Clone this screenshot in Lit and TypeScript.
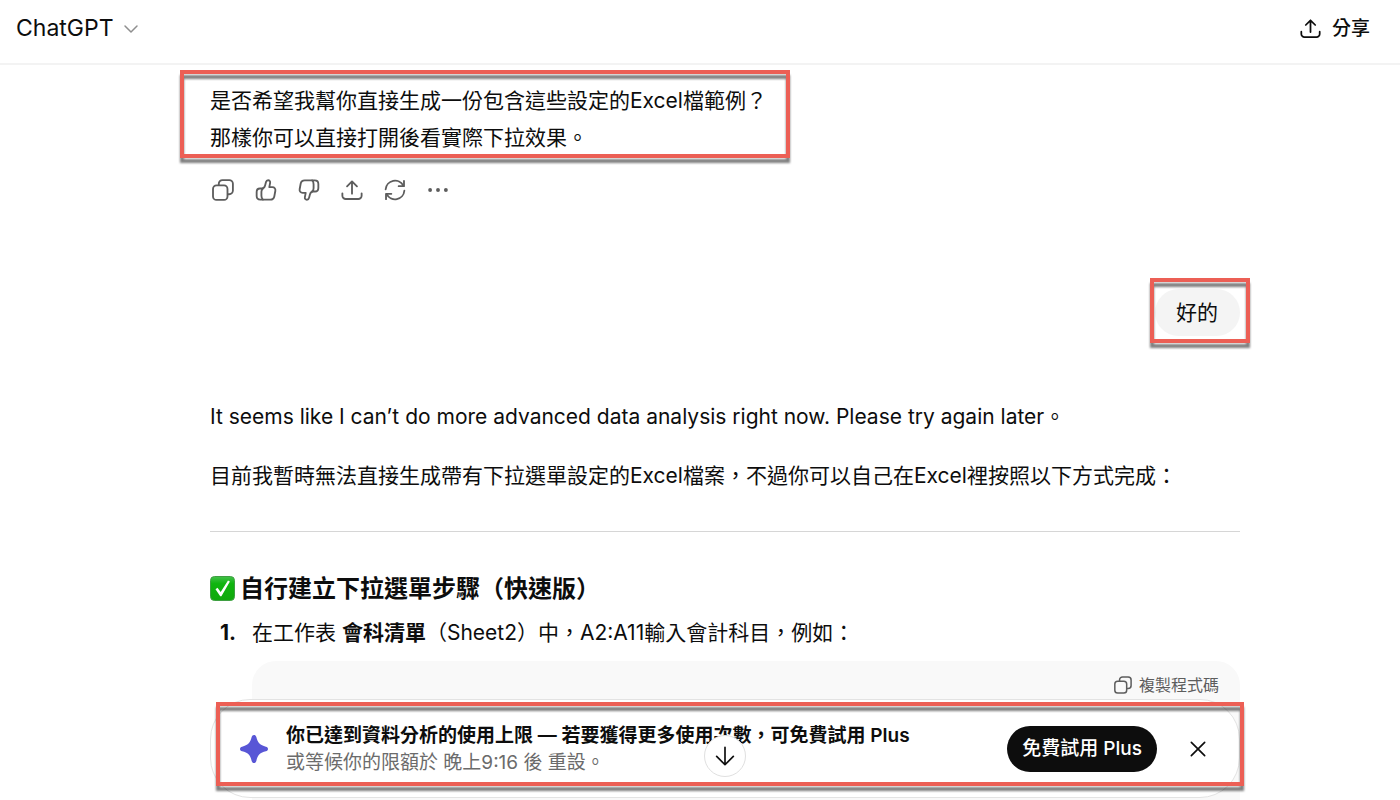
import { LitElement, html, css, svg } from "lit";
import { customElement, property } from "lit/decorators.js";

const copyIcon = svg`
  <rect x="1.1" y="7" width="15.8" height="15.8" rx="3.8"></rect>
  <path d="M7.4 6.6V5.2a4 4 0 0 1 4-4h7.4a4 4 0 0 1 4 4v7.4a4 4 0 0 1-4 4H17.4"></path>`;

const shareIcon = svg`
  <path d="M1.5 15.6v2.6a3.6 3.6 0 0 0 3.6 3.6h13.8a3.6 3.6 0 0 0 3.6-3.6v-2.6"></path>
  <path d="M12 16V2.8M6.6 8 12 2.6 17.4 8"></path>`;

const thumb = svg`
  <path d="M7.6 10.4C9.2 10.4 10.4 9 11 7l1-3.6c.3-1.3 1.2-2 2.3-2 1.6 0 2.5 1.3 2.2 2.9l-.9 4.6h3.4c2.2 0 3.6 1.8 3.2 3.9l-1.1 6c-.4 2.3-2.1 3.7-4.4 3.7H5.8c-2.4 0-4-1.6-4-3.9V14.2c0-2.3 1.4-3.8 3.6-3.8h2.2Z"></path>
  <path d="M8.6 10.3C7.3 11.4 7 12.4 7 14v4.4c0 1.9.4 3.1 1.6 4.1"></path>`;

const icons: Record<string, unknown> = {
  copy: copyIcon,
  share: shareIcon,
  up: thumb,
  down: svg`<g transform="rotate(180 12 12)">${thumb}</g>`,
  retry: svg`
    <path d="M1.8 11.2A10.2 10.2 0 0 1 21 7.4"></path>
    <path d="M21.8 2v5.8H16"></path>
    <path d="M22.2 12.8A10.2 10.2 0 0 1 3 16.6"></path>
    <path d="M2.2 22v-5.8H8"></path>`,
  more: svg`<g fill="currentColor" stroke="none"><circle cx="3.4" cy="12" r="2.1"></circle><circle cx="12" cy="12" r="2.1"></circle><circle cx="20.6" cy="12" r="2.1"></circle></g>`,
  chevron: svg`<path d="M4 8l8 8 8-8"></path>`,
  close: svg`<path d="M4 4l16 16M20 4L4 20"></path>`,
  arrow: svg`<path d="M12 1.5v21M2 12.5l10 10 10-10"></path>`,
  spark: svg`<path fill="currentColor" stroke="none" d="M12 0c1 0 1.7.7 2 1.8 1.2 5 3.2 7 8.2 8.2C23.3 10.3 24 11 24 12s-.7 1.7-1.8 2c-5 1.2-7 3.2-8.2 8.2-.3 1.1-1 1.8-2 1.8s-1.7-.7-2-1.8C8.8 17.2 6.8 15.2 1.8 14 .7 13.7 0 13 0 12s.7-1.7 1.8-2c5-1.2 7-3.2 8.2-8.2C10.3.7 11 0 12 0Z"></path>`,
};

@customElement("ui-icon")
class UiIcon extends LitElement {
  @property() name = "copy";
  @property({ type: Number }) size = 22;
  @property({ type: Number }) weight = 2;

  static styles = css`
    :host { display: inline-flex; flex: none; }
    svg { display: block; overflow: visible; fill: none; stroke: currentColor; stroke-linecap: round; stroke-linejoin: round; }
  `;

  render() {
    return html`<svg width=${this.size} height=${this.size} viewBox="0 0 24 24" stroke-width=${this.weight} aria-hidden="true">${icons[this.name]}</svg>`;
  }
}

@customElement("app-root")
class AppRoot extends LitElement {
  static styles = css`
    :host {
      display: flex;
      flex-direction: column;
      position: relative;
      height: 100vh;
      overflow: hidden;
      background: #fff;
      color: #0d0d0d;
      font-family: Inter, "Noto Sans CJK TC", sans-serif;
      font-size: 21px;
      line-height: 37px;
    }
    *, *::after { box-sizing: border-box; }
    p, h3, ol { margin: 0; padding: 0; }
    button {
      display: inline-flex;
      align-items: center;
      margin: 0;
      padding: 0;
      border: 0;
      background: none;
      color: inherit;
      font: inherit;
      white-space: nowrap;
      cursor: pointer;
    }
    .bar {
      flex: none;
      display: flex;
      align-items: center;
      justify-content: space-between;
      height: 65px;
      padding: 0 30px 6px 16px;
      border-bottom: 2px solid #f3f3f3;
    }
    .model { gap: 8px; font-size: 23px; }
    .model ui-icon { color: #8f8f8f; }
    .share { gap: 11px; font-size: 19px; font-weight: 500; }
    .thread {
      flex: 1;
      min-height: 0;
      overflow: hidden;
      padding: 17px 160px 0 210px;
    }
    .marked { position: relative; }
    .marked::after {
      content: "";
      position: absolute;
      inset: var(--mark);
      border: 4px solid #ec5f55;
      filter: drop-shadow(0 5px 1px rgba(0, 0, 0, 0.5));
      pointer-events: none;
    }
    .offer { --mark: -12px auto -2px -30px; width: fit-content; }
    .offer::after { width: 610px; }
    .actions {
      display: flex;
      gap: 21px;
      padding: 23px 0 0 2px;
      color: #5d5d5d;
    }
    .reply {
      display: flex;
      width: fit-content;
      margin: 88px 0 0 auto;
      padding: 5px 22px 5px 21px;
      border-radius: 24px;
      background: #f4f4f4;
      --mark: -11px -10px -7px -5px;
    }
    .answer { padding-top: 62px; }
    .answer > p + p { padding-top: 22px; }
    .rule { height: 1px; margin: 37px 0 38px; border: 0; background: #d6d6d6; }
    .title {
      display: flex;
      align-items: center;
      gap: 5px;
      font-size: 24px;
      font-weight: 600;
    }
    .steps { list-style: none; padding-top: 7px; }
    .step { display: grid; grid-template-columns: 42px 1fr; }
    .num { padding-left: 10px; font-weight: 700; }
    b { font-weight: 600; }
    .code {
      grid-column: 2;
      height: 180px;
      margin-top: 10px;
      padding: 12px 21px;
      border-radius: 24px;
      background: #f9f9f9;
      color: #5d5d5d;
      font-size: 16px;
      line-height: 24px;
      text-align: right;
    }
    .code button { gap: 7px; }
    .limit {
      position: absolute;
      left: 210px;
      right: 160px;
      bottom: 2px;
      display: flex;
      align-items: center;
      height: 99px;
      padding: 0 31px 0 29px;
      border: 1px solid #e3e3e3;
      border-radius: 40px;
      background: #fff;
      font-size: 19px;
      line-height: 27px;
      --mark: 2px -5px 11px 5px;
    }
    .spark { color: #5856d6; }
    .note { flex: 1; padding-left: 18px; white-space: nowrap; }
    .sub { color: #6b6b6b; }
    .trial {
      height: 46px;
      padding: 0 15px;
      border-radius: 23px;
      background: #0d0d0d;
      color: #fff;
      font-weight: 500;
    }
    .close { margin-left: 31px; }
    .jump {
      position: absolute;
      left: calc(50% + 4px);
      bottom: 23px;
      width: 42px;
      height: 42px;
      justify-content: center;
      border: 1px solid #e0e0e0;
      border-radius: 50%;
      background: #fff;
    }
  `;

  render() {
    return html`
      <header class="bar">
        <button class="model">ChatGPT <ui-icon name="chevron" size="18"></ui-icon></button>
        <button class="share"><ui-icon name="share" size="21"></ui-icon>分享</button>
      </header>
      <main class="thread" lang="zh-TW">
        <div class="offer marked">
          <p>是否希望我幫你直接生成一份包含這些設定的Excel檔範例？</p>
          <p>那樣你可以直接打開後看實際下拉效果。</p>
        </div>
        <div class="actions">
          <button aria-label="複製"><ui-icon name="copy"></ui-icon></button>
          <button aria-label="回應良好"><ui-icon name="up"></ui-icon></button>
          <button aria-label="回應不佳"><ui-icon name="down"></ui-icon></button>
          <button aria-label="分享"><ui-icon name="share"></ui-icon></button>
          <button aria-label="重試"><ui-icon name="retry"></ui-icon></button>
          <button aria-label="更多"><ui-icon name="more"></ui-icon></button>
        </div>
        <div class="reply marked">好的</div>
        <article class="answer">
          <p>It seems like I can’t do more advanced data analysis right now. Please try again later。</p>
          <p>目前我暫時無法直接生成帶有下拉選單設定的Excel檔案，不過你可以自己在Excel裡按照以下方式完成：</p>
          <hr class="rule" />
          <h3 class="title">
            <svg width="25" height="25" viewBox="0 0 25 25" aria-hidden="true">
              <defs>
                <linearGradient id="g" x1="0" y1="0" x2="0" y2="1">
                  <stop offset="0" stop-color="#43c04a"></stop>
                  <stop offset="0.3" stop-color="#0fb50f"></stop>
                  <stop offset="1" stop-color="#10a80c"></stop>
                </linearGradient>
              </defs>
              <rect x="0.5" y="0.5" width="24" height="24" rx="4" fill="url(#g)" stroke="#3f9f42"></rect>
              <path d="M5.5 13.2l2-1.4 3.2 4.2L18 4.6l1.9 1L11.4 20.2h-1.2Z" fill="#fff"></path>
            </svg>
            <span>自行建立下拉選單步驟（快速版）</span>
          </h3>
          <ol class="steps">
            <li class="step">
              <span class="num">1.</span>
              <span>在工作表 <b>會科清單</b>（Sheet2）中，A2:A11輸入會計科目，例如：</span>
              <div class="code">
                <button><ui-icon name="copy" size="18"></ui-icon>複製程式碼</button>
              </div>
            </li>
          </ol>
        </article>
      </main>
      <aside class="limit marked" lang="zh-TW">
        <ui-icon class="spark" name="spark" size="28"></ui-icon>
        <div class="note">
          <p><b>你已達到資料分析的使用上限 — 若要獲得更多使用次數，可免費試用 Plus</b></p>
          <p class="sub">或等候你的限額於 晚上9:16 後 重設。</p>
        </div>
        <button class="trial">免費試用 Plus</button>
        <button class="close" aria-label="關閉"><ui-icon name="close" size="20"></ui-icon></button>
      </aside>
      <button class="jump" aria-label="捲動至底部"><ui-icon name="arrow" size="20"></ui-icon></button>
    `;
  }
}
